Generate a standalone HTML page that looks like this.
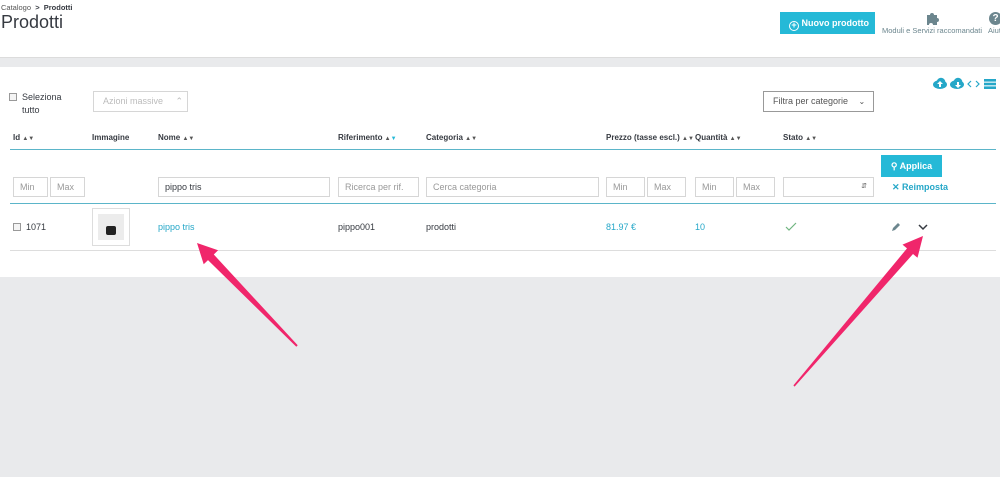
<!DOCTYPE html>
<html><head><meta charset="utf-8"><style>
*{box-sizing:border-box;margin:0;padding:0}
body{width:1000px;height:477px;overflow:hidden;background:#e9eaec;font-family:"Liberation Sans",sans-serif;color:#363a41;position:relative}
.a{position:absolute}
.hdr{left:0;top:0;width:1000px;height:58px;background:#fff;border-bottom:1px solid #dcdcdc}
.card{left:0;top:67px;width:1000px;height:210px;background:#fff}
.th{font-size:8px;font-weight:bold;top:133px}
.inp{border:1px solid #d6d6d6;height:20px;top:177px;font-size:9px;color:#999;padding:4px 6px;background:#fff}
.ln{height:1px;left:10px;width:986px}
.s{font-size:6px;color:#555;font-weight:normal}
.s b{color:#25b9d7}
</style></head><body>
<div class="a hdr"></div>
<div class="a" style="left:1px;top:3px;font-size:7.5px;color:#555">Catalogo &nbsp;<b style="color:#363a41">&gt; &nbsp;Prodotti</b></div>
<div class="a" style="left:1px;top:12px;font-size:18px;color:#363a41">Prodotti</div>
<div class="a" style="left:780px;top:12px;width:95px;height:22px;background:#25b9d7;color:#fff;font-size:9px;font-weight:bold;line-height:22px;padding-left:9px">
<span style="display:inline-block;width:10px;height:10px;border:1.3px solid #fff;border-radius:50%;vertical-align:-2px;text-align:center;line-height:7px;font-size:9px">+</span> Nuovo prodotto</div>
<svg class="a" style="left:924px;top:11px" width="16" height="15" viewBox="0 0 16 15"><path d="M3 4h3a2 2 0 1 1 4 0h3v3a2 2 0 1 1 0 4v3H9a2 2 0 1 0-4 0H3z" fill="#6c868e"/></svg>
<div class="a" style="left:882px;top:26px;font-size:7.5px;color:#6c868e;white-space:nowrap">Moduli e Servizi raccomandati</div>
<div class="a" style="left:989px;top:12px;width:13px;height:13px;border-radius:50%;background:#6c868e;color:#fff;font-size:10px;font-weight:bold;text-align:center;line-height:13px">?</div>
<div class="a" style="left:988px;top:26px;font-size:7.5px;color:#6c868e">Aiuto</div>

<div class="a card"></div>
<svg class="a" style="left:932px;top:77px" width="66" height="13" viewBox="0 0 66 13">
<g fill="#25a7c8"><ellipse cx="8" cy="7.5" rx="7" ry="4.5"/><circle cx="9" cy="5" r="4.3"/><ellipse cx="25" cy="7.5" rx="7" ry="4.5"/><circle cx="26" cy="5" r="4.3"/></g>
<path d="M8 4l-3 3h2v3h2V7h2zM26 11l-3-3h2V5h2v3h2z" fill="#fff"/>
<path d="M39 4l-3 3 3 3M44 4l3 3-3 3" stroke="#25a7c8" fill="none" stroke-width="1.2"/>
<g fill="#25a7c8"><rect x="52" y="2" width="12" height="2.6"/><rect x="52" y="5.7" width="12" height="2.6"/><rect x="52" y="9.4" width="12" height="2.6"/></g>
</svg>
<div class="a" style="left:9px;top:93px;width:8px;height:8px;border:1px solid #999;background:#f4f4f4"></div>
<div class="a" style="left:22px;top:91px;font-size:9px;line-height:13px;color:#363a41">Seleziona<br>tutto</div>
<div class="a" style="left:93px;top:91px;width:95px;height:21px;border:1px solid #d6d6d6;font-size:9px;color:#bbb;line-height:19px;padding-left:9px">Azioni massive <span style="margin-left:10px">&#8963;</span></div>
<div class="a" style="left:763px;top:91px;width:111px;height:21px;border:1px solid #999;font-size:9px;color:#555;line-height:19px;padding-left:9px">Filtra per categorie <span style="margin-left:8px;font-size:8px">&#8964;</span></div>

<div class="a th" style="left:13px">Id <span class="s">▲▼</span></div>
<div class="a th" style="left:92px">Immagine</div>
<div class="a th" style="left:158px">Nome <span class="s">▲▼</span></div>
<div class="a th" style="left:338px">Riferimento <span class="s">▲<b>▼</b></span></div>
<div class="a th" style="left:426px">Categoria <span class="s">▲▼</span></div>
<div class="a th" style="left:606px">Prezzo (tasse escl.) <span class="s">▲▼</span></div>
<div class="a th" style="left:695px">Quantità <span class="s">▲▼</span></div>
<div class="a th" style="left:783px">Stato <span class="s">▲▼</span></div>
<div class="a ln" style="top:149px;background:#5bb5c9"></div>

<div class="a" style="left:881px;top:155px;width:61px;height:22px;background:#25b9d7;color:#fff;font-size:9px;font-weight:bold;line-height:22px;text-align:center">&#9906; Applica</div>
<div class="a" style="left:892px;top:182px;font-size:9px;color:#25a7c8;font-weight:bold">✕ Reimposta</div>
<div class="a inp" style="left:13px;width:35px">Min</div>
<div class="a inp" style="left:50px;width:35px">Max</div>
<div class="a inp" style="left:158px;width:172px;color:#363a41">pippo tris</div>
<div class="a inp" style="left:338px;width:81px">Ricerca per rif.</div>
<div class="a inp" style="left:426px;width:173px">Cerca categoria</div>
<div class="a inp" style="left:606px;width:39px">Min</div>
<div class="a inp" style="left:647px;width:39px">Max</div>
<div class="a inp" style="left:695px;width:39px">Min</div>
<div class="a inp" style="left:736px;width:39px">Max</div>
<div class="a inp" style="left:783px;width:91px;text-align:right;color:#555;font-size:7px">&#8693;</div>
<div class="a ln" style="top:203px;background:#5bb5c9"></div>

<div class="a" style="left:13px;top:223px;width:8px;height:8px;border:1px solid #999;background:#f4f4f4"></div>
<div class="a" style="left:26px;top:222px;font-size:9px">1071</div>
<div class="a" style="left:92px;top:208px;width:38px;height:38px;border:1px solid #ddd;background:#fff"><div style="margin:5px;width:26px;height:26px;background:#ececec;position:relative"><div style="position:absolute;left:8px;top:12px;width:10px;height:9px;background:#222;border-radius:2px"></div></div></div>
<div class="a" style="left:158px;top:222px;font-size:9px;color:#25a7c8">pippo tris</div>
<div class="a" style="left:338px;top:222px;font-size:9px">pippo001</div>
<div class="a" style="left:426px;top:222px;font-size:9px">prodotti</div>
<div class="a" style="left:606px;top:222px;font-size:9px;color:#25a7c8">81.97 €</div>
<div class="a" style="left:695px;top:222px;font-size:9px;color:#25a7c8">10</div>
<svg class="a" style="left:785px;top:222px" width="12" height="10"><path d="M1 5l3 3 7-7" stroke="#70b580" fill="none" stroke-width="1.2"/></svg>
<svg class="a" style="left:891px;top:222px" width="10" height="10"><path d="M1 9l1-3 5-5 2 2-5 5z" fill="#6c868e"/></svg>
<svg class="a" style="left:918px;top:224px" width="10" height="7"><path d="M1 1l4 4 4-4" stroke="#363a41" fill="none" stroke-width="1.5"/></svg>
<div class="a ln" style="top:250px;background:#ddd"></div>

<svg class="a" style="left:0;top:0" width="1000" height="477">
<polygon fill="#f0266b" points="297.7,345.3 213.8,254.5 218.1,250.3 197,243 203.7,264.3 208,260.1 296.3,346.7"/>
<polygon fill="#f0266b" points="794.6,386.6 913,254 917.5,257.8 923,236 902.5,244.6 907,248.4 793.4,385.4"/>
</svg>
</body></html>
